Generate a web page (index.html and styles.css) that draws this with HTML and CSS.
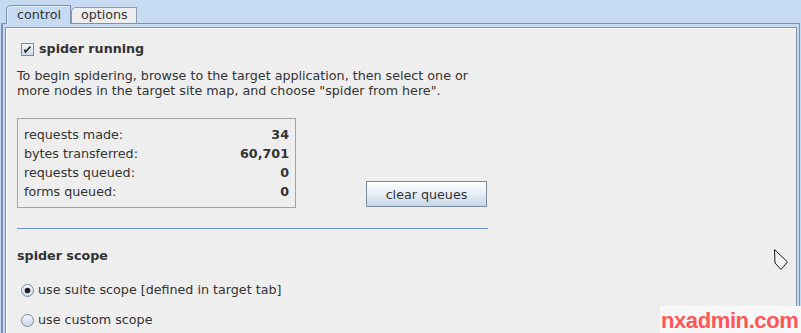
FILE: index.html
```html
<!DOCTYPE html>
<html lang="en">
<head>
    <meta charset="UTF-8">
    <title>Spider</title>
    <link rel="stylesheet" href="styles.css">
</head>
<body>
    <div class="window">
        <div class="tabs">
            <div class="tab selected">control</div>
            <div class="tab">options</div>
        </div>

        <div class="panel">
            <div class="content">
                <div class="check-row">
                    <svg class="checkbox" width="13" height="13" viewBox="0 0 13 13">
                        <defs>
                            <linearGradient id="boxfill" x1="0" y1="0" x2="0" y2="1">
                                <stop offset="0" stop-color="#f4f8fc"/>
                                <stop offset="1" stop-color="#c9d9ec"/>
                            </linearGradient>
                        </defs>
                        <rect x="0.5" y="0.5" width="12" height="12" fill="url(#boxfill)" stroke="#7a8a9b"/>
                        <path d="M3.5 6.5 L4.5 9 L9.5 3.5" fill="none" stroke="#1e1e1e" stroke-width="1.6"/>
                    </svg>
                    <span class="bold">spider running</span>
                </div>

                <p class="intro">To begin spidering, browse to the target application, then select one or<br>more nodes in the target site map, and choose "spider from here".</p>

                <div class="stats-row">
                    <div class="stats">
                        <div class="stat"><span>requests made:</span><b>34</b></div>
                        <div class="stat"><span>bytes transferred:</span><b>60,701</b></div>
                        <div class="stat"><span>requests queued:</span><b>0</b></div>
                        <div class="stat"><span>forms queued:</span><b>0</b></div>
                    </div>
                    <button class="btn">clear queues</button>
                </div>

                <div class="sep"></div>

                <div class="section">spider scope</div>

                <div class="radio-row first">
                    <svg class="radio" width="13" height="13" viewBox="0 0 13 13">
                        <defs>
                            <linearGradient id="radfill" x1="0" y1="0" x2="0" y2="1">
                                <stop offset="0" stop-color="#f6f9fc"/>
                                <stop offset="1" stop-color="#c6d6ea"/>
                            </linearGradient>
                        </defs>
                        <circle cx="6.5" cy="6.5" r="6" fill="url(#radfill)" stroke="#7a8a9b"/>
                        <circle cx="6.5" cy="6.5" r="2.8" fill="#1e1e1e"/>
                    </svg>
                    <span>use suite scope [defined in target tab]</span>
                </div>
                <div class="radio-row">
                    <svg class="radio" width="13" height="13" viewBox="0 0 13 13">
                        <circle cx="6.5" cy="6.5" r="6" fill="url(#radfill)" stroke="#7a8a9b"/>
                    </svg>
                    <span>use custom scope</span>
                </div>
            </div>
        </div>

        <svg class="cursor" width="15" height="22" viewBox="0 0 15 22">
            <path d="M0.5 0.5 L1 14 L7 20.5 L13.5 13 Z" fill="#f2f2f2" stroke="#1a1a1a" stroke-linejoin="round"/>
        </svg>

        <div class="watermark">nxadmin.com</div>
    </div>
</body>
</html>
```

FILE: styles.css
```css
* {
    margin: 0;
    padding: 0;
    box-sizing: border-box;
}

body {
    width: 801px;
    height: 333px;
    overflow: hidden;
    background: #c6daf1;
    font-family: "DejaVu Sans", sans-serif;
    font-size: 12.7px;
    color: #333;
}

.window {
    position: relative;
    height: 333px;
}

/* tab strip */
.tabs {
    display: flex;
    align-items: flex-end;
    height: 23px;
    padding-left: 6px;
}

.tab {
    height: 16px;
    padding: 0 8px 0 9px;
    line-height: 14px;
    background: #eeeeee;
    border: 1px solid #8d9aab;
    border-bottom: none;
    border-top-left-radius: 5px;
}

.tab.selected {
    position: relative;
    z-index: 1;
    height: 19px;
    margin-bottom: -1px;
    padding: 1px 9px 0 10px;
    line-height: 16px;
    background: #c6daf1;
    border-color: #7b90b2;
    box-shadow: inset 1px 1px 0 #e4eefa;
}

/* panel around the tab content */
.panel {
    width: 799px;
    height: 310px;
    margin-left: 1px;
    padding: 3px 2px 0 2px;
    border-top: 1px solid #7b90b2;
    border-left: 2px solid #7b90b2;
    border-right: 1px solid #7b90b2;
}

.content {
    height: 100%;
    padding: 13px 0 0 11px;
    background: #eeeeee;
    border: 1px solid #8595ab;
    border-bottom: none;
    box-shadow: inset 1px 1px 0 #ffffff;
}

.check-row,
.radio-row {
    display: flex;
    align-items: center;
    height: 16px;
    line-height: 16px;
}

.checkbox {
    margin: 0 5px 0 4px;
}

.radio {
    margin: 0 4px 0 4px;
}

.bold,
.section {
    font-weight: bold;
}

.intro {
    margin-top: 11px;
    line-height: 15px;
}

/* stats box + button */
.stats-row {
    display: flex;
    align-items: flex-end;
    gap: 70px;
    margin-top: 20px;
}

.stats {
    width: 279px;
    height: 90px;
    padding: 6px 6px 5px 6px;
    border: 1px solid #a3a3a3;
}

.stat {
    display: flex;
    justify-content: space-between;
    height: 19px;
    line-height: 19px;
}

.btn {
    width: 121px;
    height: 26px;
    margin-bottom: 1px;
    font-family: "DejaVu Sans", sans-serif;
    font-size: 12.7px;
    color: #333;
    background: linear-gradient(#ffffff, #e9f0f7 45%, #c6d6ea);
    border: 1px solid #7a8a9b;
}

.sep {
    width: 471px;
    height: 1px;
    margin-top: 20px;
    background: #6f90cb;
}

.section {
    margin-top: 19px;
    line-height: 16px;
}

.radio-row.first {
    margin-top: 18px;
}

.radio-row {
    margin-top: 14px;
}

/* overlays */
.cursor {
    position: absolute;
    left: 774px;
    top: 249px;
}

.watermark {
    position: absolute;
    left: 660px;
    top: 306px;
    width: 141px;
    height: 27px;
    padding-left: 1px;
    background: #f7f7f7;
    color: #ff5656;
    font-family: "Liberation Sans", sans-serif;
    font-weight: bold;
    font-size: 22px;
    line-height: 29px;
    letter-spacing: -0.4px;
    white-space: nowrap;
}
```
